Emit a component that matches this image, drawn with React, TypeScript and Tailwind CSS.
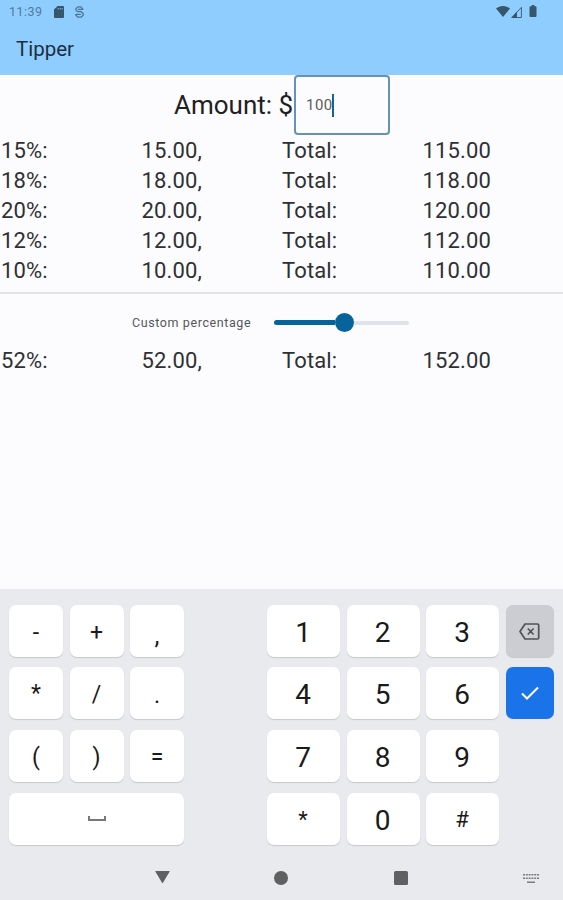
import { useState } from "react";
import clsx from "clsx";

const TIP_PERCENTAGES = [15, 18, 20, 12, 10];

const SYMBOL_KEYS = ["-", "+", ",", "*", "/", ".", "(", ")", "="];
const NUMBER_KEYS = ["1", "2", "3", "4", "5", "6", "7", "8", "9", "*", "0", "#"];

function symbolKeyClass(label: string) {
  if (label === ",") return "pt-[10px] text-[25px]";
  if (label === ".") return "pt-[5px] text-[23px]";
  if (label === "*") return "pt-px text-[23px]";
  return "pt-[3px] text-[23px]";
}

function StatusBar() {
  return (
    <div className="flex h-6 items-center pl-[9px] pr-[26px] text-[#35566d]">
      <span className="w-[45px] text-[12.5px] leading-6 tracking-[0.5px] text-[#517a99]">
        11:39
      </span>
      <svg className="h-3 w-[10px]" viewBox="0 0 10 12" fill="currentColor">
        <path
          d="M3.6 0H9a1 1 0 0 1 1 1v10a1 1 0 0 1-1 1H1a1 1 0 0 1-1-1V3.6ZM3.8 2v1.6h.8V2Zm2 0v1.6h.8V2Zm2 0v1.6h.8V2Z"
          fillRule="evenodd"
        />
      </svg>
      <svg
        className="ml-[11px] h-3 w-[9px]"
        viewBox="0 0 9 12"
        fill="none"
        stroke="#4b7593"
        strokeWidth="1.3"
      >
        <path d="M8.2 3.4 5.8.8H3L.9 2.800V4L2.800 5.700H6.200L8.200 7.500V9.200L6.200 11.200H2.900L.9 9.200V8M3 3.300H8.300M.8 8.400H5.800" />
      </svg>
      <svg className="mb-px ml-auto h-[11px] w-[14px]" viewBox="0 0 14 11" fill="currentColor">
        <path d="M7 11 0 2.6C2 1 4.3 0 7 0s5 1 7 2.6Z" />
      </svg>
      <svg className="ml-[1px] h-[12px] w-[11px]" viewBox="0 0 11 12">
        <path d="M0 12 6 5.5V12Z" fill="currentColor" />
        <path d="M1.2 11.5 10.4 1.3v10.2Z" fill="none" stroke="currentColor" strokeWidth="0.9" />
      </svg>
      <svg className="mb-[2px] ml-[7px] h-3 w-[8px]" viewBox="0 0 7 12" fill="currentColor">
        <path d="M2.2 0h2.6v1.2H6a1 1 0 0 1 1 1V11a1 1 0 0 1-1 1H1a1 1 0 0 1-1-1V2.2a1 1 0 0 1 1-1h1.2Z" />
      </svg>
    </div>
  );
}

function TipRow({ percentage, amount }: { percentage: number; amount: number }) {
  const tip = (amount * percentage) / 100;

  return (
    <div className="grid h-[30px] grid-cols-4 items-center pl-px text-[22px] leading-[30px] tracking-[0.15px] text-[#2f3033]">
      <span>{percentage}%:</span>
      <span>{tip.toFixed(2)},</span>
      <span>Total:</span>
      <span>{(amount + tip).toFixed(2)}</span>
    </div>
  );
}

function Key({
  label,
  className,
  onPress,
}: {
  label: string;
  className?: string;
  onPress: (label: string) => void;
}) {
  return (
    <button
      type="button"
      onClick={() => onPress(label)}
      className={clsx(
        "flex h-[52px] items-center justify-center rounded-[7px] bg-white leading-none text-[#1a1a1b] shadow-[0_1px_1px_#c6c8cc]",
        className,
      )}
    >
      {label}
    </button>
  );
}

export default function App() {
  const [amount, setAmount] = useState("100");
  const [custom] = useState(52);

  const amountN = Number(amount) || 0;
  const append = (label: string) => setAmount((value) => value + label);

  return (
    <main className="flex h-[900px] w-[563px] flex-col overflow-hidden bg-[#fcfcff] font-[Roboto,sans-serif]">
      <header className="h-[75px] shrink-0 bg-[#90cdff]">
        <StatusBar />
        <h1 className="pl-4 pt-[9px] text-[20.5px] leading-8 text-[#1d2f3d]">Tipper</h1>
      </header>

      <section className="flex h-[61px] shrink-0 pl-[174px]">
        <span className="w-[120px] whitespace-nowrap text-[26px] leading-[61px] text-[#1f2022]">
          Amount: $
        </span>
        <div className="flex h-[60px] w-[96px] items-center rounded-[4px] border-2 border-[#6592b5] pl-[10px]">
          <span className="text-[15px] leading-6 tracking-[0.5px] text-[#5a5b5e]">{amount}</span>
          <span className="-ml-px h-[23px] w-[2px] bg-[#17629a]" />
        </div>
      </section>

      <section className="shrink-0">
        {TIP_PERCENTAGES.map((percentage) => (
          <TipRow key={percentage} percentage={percentage} amount={amountN} />
        ))}
      </section>

      <hr className="mt-[6px] h-[2px] shrink-0 border-0 bg-[#e0e3e8]" />

      <section className="flex h-[52px] shrink-0 items-center pl-[132px] pt-[5px]">
        <span className="w-[142px] pt-[2px] text-[12.5px] tracking-[0.6px] text-[#55565a]">
          Custom percentage
        </span>
        <div className="flex w-[135px] items-center">
          <span className="h-[5px] w-[61px] rounded-l-full bg-[#07639b]" />
          <span className="size-[19px] rounded-full bg-[#07639b]" />
          <span className="h-1 flex-1 rounded-r-full bg-[#dfe3eb]" />
        </div>
      </section>
      <TipRow percentage={custom} amount={amountN} />

      <section className="mt-auto h-[311px] shrink-0 bg-[#e8eaed] px-[9px] pt-[15.5px]">
        <div className="flex">
          <div className="grid w-[175px] grid-cols-3 gap-x-[6.5px] gap-y-[10.7px]">
            {SYMBOL_KEYS.map((label) => (
              <Key
                key={label}
                label={label}
                className={symbolKeyClass(label)}
                onPress={append}
              />
            ))}
            <button
              type="button"
              aria-label="Space"
              onClick={() => append(" ")}
              className="col-span-3 flex h-[52px] items-center justify-center rounded-[7px] bg-white shadow-[0_1px_1px_#c6c8cc]"
            >
              <span className="h-[5px] w-[18px] border-x-2 border-b-2 border-[#77787a]" />
            </button>
          </div>

          <div className="ml-[83px] grid w-[232px] grid-cols-3 gap-x-[6.5px] gap-y-[10.7px]">
            {NUMBER_KEYS.map((label) => (
              <Key
                key={label}
                label={label}
                className={
                  label === "*" || label === "#"
                    ? "pr-px pt-[2px] text-[22px]"
                    : "pr-px pt-[4px] text-[28px]"
                }
                onPress={append}
              />
            ))}
          </div>

          <div className="ml-[7px] flex w-[48px] flex-col gap-[10.7px]">
            <button
              type="button"
              aria-label="Delete"
              onClick={() => setAmount((value) => value.slice(0, -1))}
              className="flex h-[52px] items-center justify-center rounded-[7px] bg-[#cbcdd2] pt-px shadow-[0_1px_1px_#c6c8cc]"
            >
              <svg
                className="mr-[2px] h-[17px] w-[21px]"
                viewBox="0 0 21 17"
                fill="none"
                stroke="#505257"
                strokeWidth="1.7"
                strokeLinejoin="round"
              >
                <path d="M6 1h12.5a1.2 1.2 0 0 1 1.2 1.2v12.6a1.2 1.2 0 0 1-1.2 1.2H6L1 8.5ZM8.8 5.5l5.800 6M14.600 5.500l-5.800 6" />
              </svg>
            </button>
            <button
              type="button"
              aria-label="Done"
              className="flex h-[52px] items-center justify-center rounded-[7px] bg-[#1a73e8]"
            >
              <svg
                className="mr-px h-[14px] w-[18px]"
                viewBox="0 0 18 14"
                fill="none"
                stroke="white"
                strokeWidth="2"
              >
                <path d="m1 7.5 5 5L17 1.5" />
              </svg>
            </button>
          </div>
        </div>

        <nav className="flex h-[65px] items-center text-[#5f6062]">
          <svg className="ml-[146px] h-[14px] w-[15px]" viewBox="0 0 16 14" fill="currentColor">
            <path d="M1 .5h14a.6.6 0 0 1 .5 1L8.5 13a.6.6 0 0 1-1 0L.5 1.5A.6.6 0 0 1 1 .5Z" />
          </svg>
          <span className="ml-[104px] mt-px size-[14px] rounded-full bg-current" />
          <span className="ml-[106px] mt-[2px] size-[14px] rounded-[1.5px] bg-current" />
          <svg className="ml-[115px] mt-[3px] h-[10px] w-[16px]" viewBox="0 0 16 10" fill="#7b7d80">
            <path d="M0 0h2v1.5H0Zm2.8 0h2v1.5h-2Zm2.8 0h2v1.5h-2Zm2.8 0h2v1.5h-2Zm2.8 0h2v1.5h-2Zm2.8 0h2v1.5h-2ZM0 3.5h2V5H0Zm2.8 0h2V5h-2Zm2.8 0h2V5h-2Zm2.8 0h2V5h-2Zm2.8 0h2V5h-2Zm2.8 0h2V5h-2ZM4 7.5h8V9H4Z" />
          </svg>
        </nav>
      </section>
    </main>
  );
}
